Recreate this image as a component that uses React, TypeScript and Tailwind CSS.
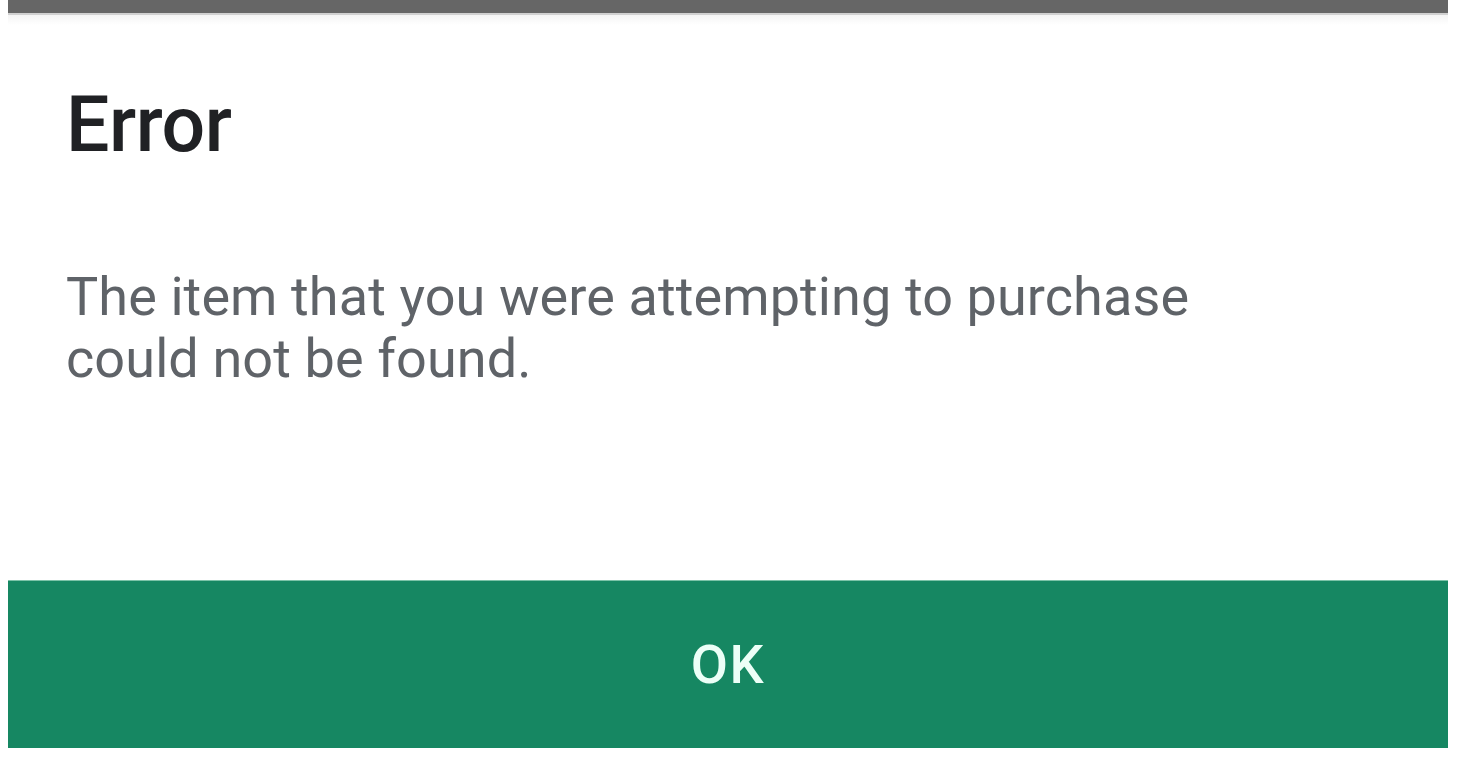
export default function App() {
  return (
    <div className="h-[770px] w-[1480px] bg-white font-['Roboto',sans-serif]">
      <div className="ml-2 flex h-[748px] w-[1440px] flex-col bg-white">
        <div className="h-[13px] bg-[#666666]" />
        <div className="h-[2px] bg-[#d0d0d0]" />
        <div className="h-[10px] bg-gradient-to-b from-[#f4f4f4] to-white" />
        <div className="flex flex-1 flex-col px-[58px]">
          <h1 className="mt-[62px] text-[77px] leading-none font-medium tracking-[-0.5px] text-[#202124]">
            Error
          </h1>
          <p className="mt-[102px] text-[54px] leading-[62px] tracking-[0.1px] text-[#5f6368]">
            The item that you were attempting to purchase
            <br />
            could not be found.
          </p>
        </div>
        <button className="flex h-[168px] items-center justify-center border-t border-[#7cc3a8] bg-[#168762] text-[54px] font-medium tracking-[1.5px] text-[#ecfff7]">
          OK
        </button>
      </div>
    </div>
  );
}
